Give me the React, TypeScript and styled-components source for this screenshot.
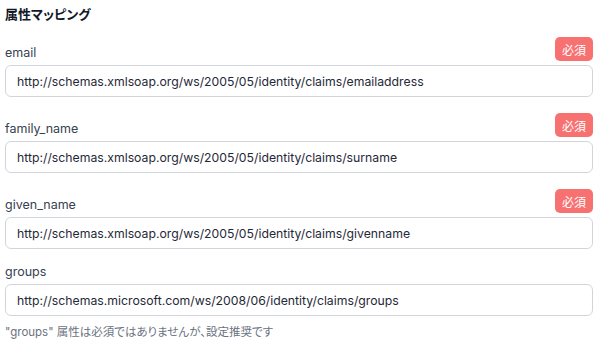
import React from 'react';
import styled, { createGlobalStyle } from 'styled-components';

const GlobalStyle = createGlobalStyle`
    html, body {
        margin: 0;
        padding: 0;
        background: #ffffff;
    }
    body {
        font-family: Inter, "Noto Sans CJK JP", sans-serif;
        font-feature-settings: "palt";
        color: #1f2937;
    }
`;

const Section = styled.section`
    width: 588px;
    padding: 5px 8px 0 5px;
`;

const Title = styled.h3`
    margin: 0 0 14px;
    font-size: 13px;
    line-height: 18px;
    font-weight: 700;
    color: #111827;
`;

const FieldList = styled.div``;

// fields without a badge have a shorter header, so they sit a bit closer
const Field = styled.div<{ $tight?: boolean }>`
    &:not(:first-child) {
        margin-top: ${props => (props.$tight ? 14 : 16)}px;
    }
`;

const FieldHeader = styled.div`
    display: flex;
    align-items: flex-end;
    justify-content: space-between;
    margin-bottom: 4px;
`;

const Label = styled.label`
    font-size: 12.5px;
    line-height: 17px;
    color: #374151;
`;

const RequiredBadge = styled.span`
    display: inline-flex;
    align-items: center;
    justify-content: center;
    height: 24px;
    padding: 0 7px;
    border-radius: 5px;
    background: #f87171;
    color: #ffffff;
    font-size: 12px;
`;

const Input = styled.input`
    box-sizing: border-box;
    display: block;
    width: 100%;
    height: 32px;
    padding: 0 11px;
    border: 1px solid #d1d5db;
    border-radius: 6px;
    font-family: inherit;
    font-size: 12.25px;
    color: #1f2937;
    background: #ffffff;
    outline: none;
`;

const Hint = styled.p`
    margin: 8px 0 0;
    font-size: 11.5px;
    line-height: 16px;
    color: #6b7280;
`;

type Mapping = {
    name: string;
    claim: string;
    required: boolean;
};

const mappings: Mapping[] = [
    {
        name: 'email',
        claim: 'http://schemas.xmlsoap.org/ws/2005/05/identity/claims/emailaddress',
        required: true,
    },
    {
        name: 'family_name',
        claim: 'http://schemas.xmlsoap.org/ws/2005/05/identity/claims/surname',
        required: true,
    },
    {
        name: 'given_name',
        claim: 'http://schemas.xmlsoap.org/ws/2005/05/identity/claims/givenname',
        required: true,
    },
    {
        name: 'groups',
        claim: 'http://schemas.microsoft.com/ws/2008/06/identity/claims/groups',
        required: false,
    },
];

const App = () => {
    return (
        <>
            <GlobalStyle />
            <Section>
                <Title>属性マッピング</Title>
                <FieldList>
                    {mappings.map(m => (
                        <Field key={m.name} $tight={!m.required}>
                            <FieldHeader>
                                <Label htmlFor={m.name}>{m.name}</Label>
                                {m.required && <RequiredBadge>必須</RequiredBadge>}
                            </FieldHeader>
                            <Input id={m.name} defaultValue={m.claim} readOnly />
                        </Field>
                    ))}
                </FieldList>
                <Hint>"groups" 属性は必須ではありませんが、設定推奨です</Hint>
            </Section>
        </>
    );
};

export default App;
